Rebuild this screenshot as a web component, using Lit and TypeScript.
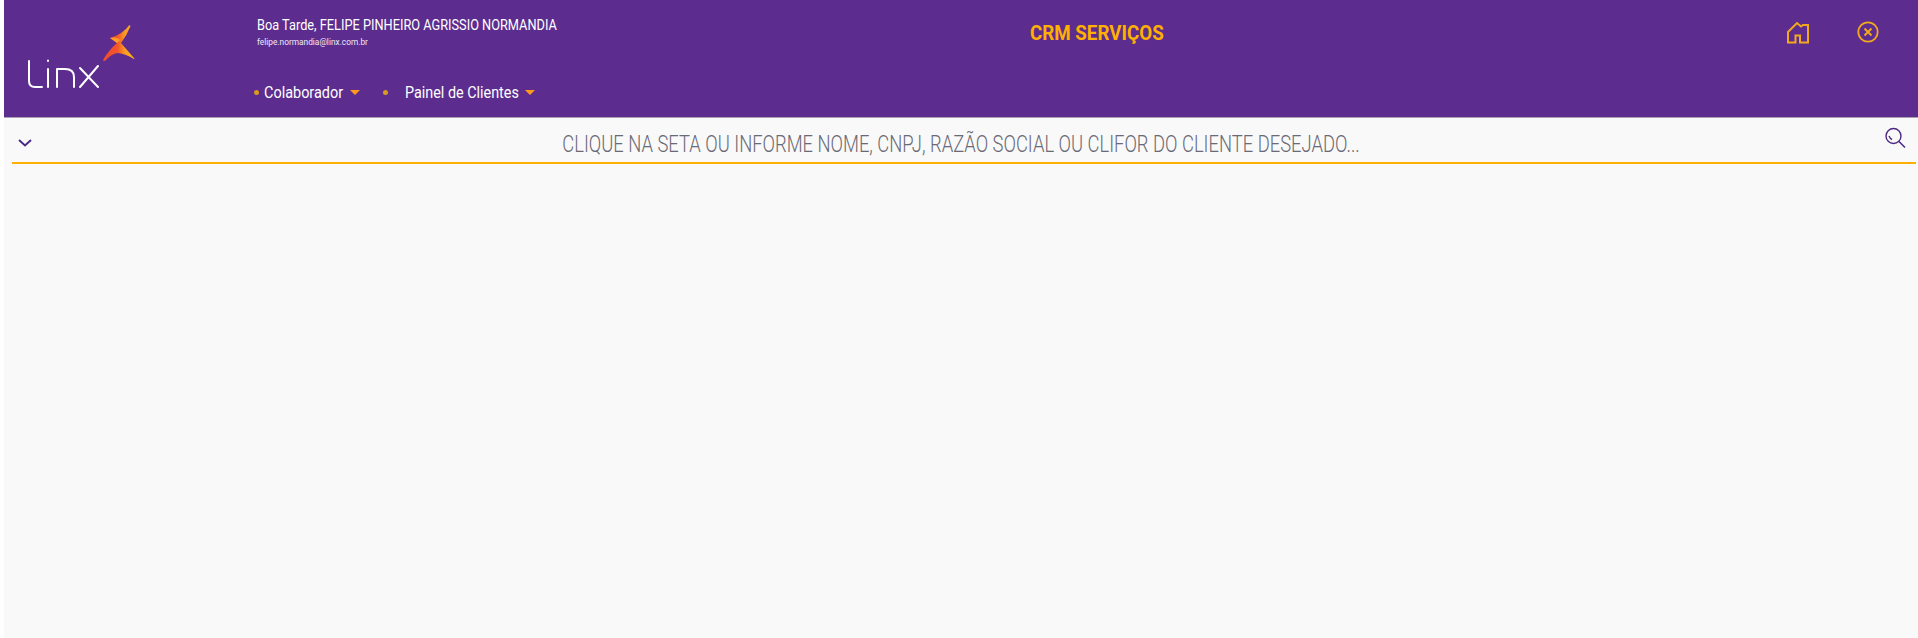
import { LitElement, html, css } from "lit";
import { customElement } from "lit/decorators.js";

@customElement("app-root")
export class AppRoot extends LitElement {
  static styles = css`
    :host { display: block; width: 1918px; height: 638px; background: #fff; font-family: Roboto, "Liberation Sans", sans-serif; overflow: hidden; }
    .page { margin-left: 4px; height: 638px; background: #f9f9f9; display: flex; flex-direction: column; }
    header { height: 117px; flex: none; background: #5c2d8e; border-bottom: 1px solid #a9a2b3; display: flex; align-items: flex-start; }
    .logo { width: 249px; flex: none; }
    .logo svg { display: block; }
    .user { width: 777px; flex: none; display: flex; flex-direction: column; color: #fff; }
    .fit { display: block; white-space: nowrap; transform-origin: left center; }
    .hello { font-size: 15px; line-height: 18px; margin-top: 16px; margin-left: 4px; width: 299px; transform: scaleX(0.851); }
    .mail { font-size: 9px; line-height: 11px; margin-top: 3px; margin-left: 4px; color: #f1eaf7; width: 111px; transform: scaleX(0.925); }
    .menu { display: flex; align-items: center; margin-top: 34px; margin-left: 1px; font-size: 17px; line-height: 20px; }
    .dot { width: 5px; height: 5px; border-radius: 50%; background: #d99a1e; flex: none; }
    .caret { width: 0; height: 0; border-left: 5px solid transparent; border-right: 5px solid transparent; border-top: 5px solid #ff9a1a; flex: none; margin-left: 7px; }
    .colab { width: 79px; margin-left: 5px; transform: scaleX(0.85); }
    .d2 { margin-left: 23px; }
    .panel { width: 113px; margin-left: 17px; transform: scaleX(0.845); }
    .title { width: 134px; flex: none; color: #ffb000; font-size: 20px; font-weight: 700; line-height: 26px; margin-top: 20px; transform: scaleX(0.937); }
    .home { display: block; flex: none; margin-left: 622px; margin-top: 20px; }
    .close { display: block; flex: none; margin-left: 46px; margin-top: 21px; }
    .search { display: flex; align-items: center; margin-left: 8px; margin-right: 2px; height: 44px; border-bottom: 2px solid #ffb000; }
    .chev { margin-left: 6px; margin-top: 6px; flex: none; display: block; }
    .ph { flex: 1; display: flex; justify-content: center; margin-top: 10px; margin-left: 6px; }
    .ph span { flex: none; color: #6a6a76; font-size: 23px; line-height: 26px; white-space: nowrap; font-weight: 300; transform: scaleX(0.799); }
    .mag { flex: none; display: block; margin-right: 10px; margin-top: -4px; }
  `;

  render() {
    return html`
      <div class="page">
        <header>
          <div class="logo">
            <svg width="140" height="117" viewBox="0 0 140 117">
              <defs>
                <linearGradient id="g" gradientUnits="userSpaceOnUse" x1="99" y1="0" x2="131" y2="0">
                  <stop offset="0" stop-color="#ee4b2f"/>
                  <stop offset="0.45" stop-color="#f1552c"/>
                  <stop offset="0.68" stop-color="#fb9a24"/>
                  <stop offset="1" stop-color="#fdb913"/>
                </linearGradient>
              </defs>
              <g fill="none" stroke="#fff" stroke-width="2" stroke-linecap="round" stroke-linejoin="round">
                <path d="M25 61v20q0 6 6 6h7"/>
                <path d="M44 69v18"/>
                <path d="M44 60.500v.5"/>
                <path d="M53 87V69h8q9 0 9 8v10"/>
                <path d="M76 68l18 19M94 66L76 87"/>
              </g>
              <path fill="url(#g)" d="M125 25.500Q119 34 106 38L113 43Q104 51 99 60Q100 62 102 60Q107 54 114 53Q122 54 130 59Q131 59 130 58L117 43Q123 35 126.500 26Q126 25 125 25.500Z"/>
              <path fill="#fa9f25" d="M106 38L113 43L116 40Q113 36.500 106 38Z"/>
            </svg>
          </div>
          <div class="user">
            <div class="fit hello">Boa Tarde, FELIPE PINHEIRO AGRISSIO NORMANDIA</div>
            <div class="fit mail">felipe.normandia@linx.com.br</div>
            <div class="menu">
              <span class="dot"></span><span class="fit colab">Colaborador</span><span class="caret"></span>
              <span class="dot d2"></span><span class="fit panel">Painel de Clientes</span><span class="caret"></span>
            </div>
          </div>
          <div class="fit title">CRM SERVIÇOS</div>
          <svg class="home" width="24" height="24" viewBox="0 0 24 24" fill="none" stroke="#f2a81d" stroke-width="2">
            <path d="M2 22.500V12L11 3l4 3.500 2-1.500h5v17.500h-8v-7H9.500v7z"/>
          </svg>
          <svg class="close" width="24" height="24" viewBox="0 0 24 24" fill="none" stroke="#f2a81d" stroke-width="1.800">
            <circle cx="12" cy="11" r="9.700"/>
            <path d="M8.500 7.500l7 7M15.500 7.500l-7 7" stroke-width="2"/>
          </svg>
        </header>
        <div class="search">
          <svg class="chev" width="14" height="8" viewBox="0 0 14 8" fill="none" stroke="#4c2a85" stroke-width="2"><path d="M1 1l6 5.500L13 1"/></svg>
          <div class="ph"><span>CLIQUE NA SETA OU INFORME NOME, CNPJ, RAZÃO SOCIAL OU CLIFOR DO CLIENTE DESEJADO...</span></div>
          <svg class="mag" width="22" height="22" viewBox="0 0 22 22" fill="none" stroke="#4c2a85" stroke-width="1.400">
            <circle cx="9.500" cy="9" r="7.500"/><path d="M15 14.500l6 6" stroke-width="1.600"/><path d="M5 9q1 2.500 3 3.500"/>
          </svg>
        </div>
      </div>
    `;
  }
}
